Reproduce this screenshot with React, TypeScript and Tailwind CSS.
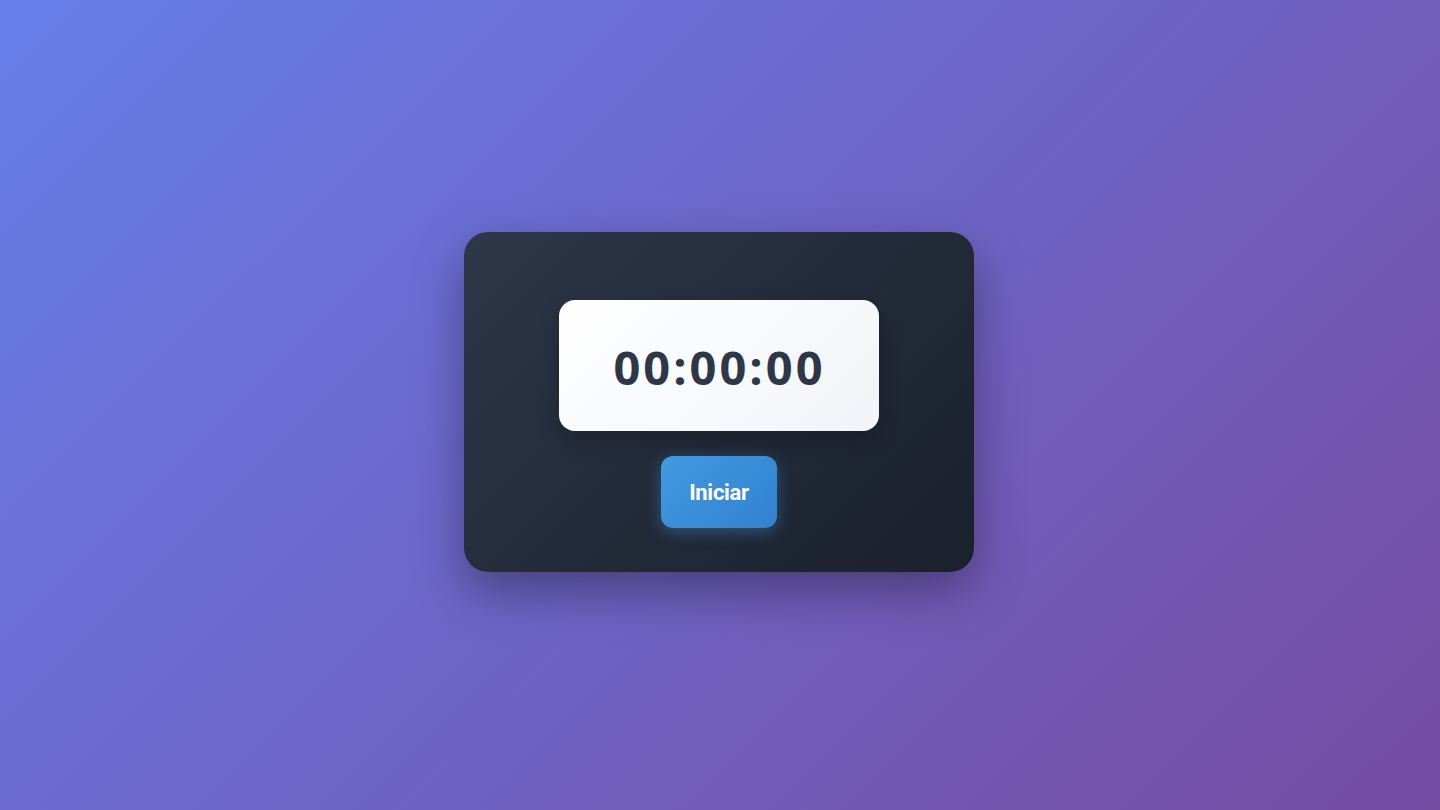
import React from "react";

export default function App() {
  return (
    <div className="w-full h-[810px] flex items-center justify-center bg-[linear-gradient(135deg,#667eea_0%,#764ba2_100%)]" style={{ fontFamily: "Roboto, 'Liberation Sans', sans-serif" }}>
      <div className="mb-[6px] mr-[2px] w-[510px] h-[340px] rounded-[24px] bg-[linear-gradient(135deg,#2d3748_0%,#1a202c_100%)] shadow-[0_20px_50px_rgba(0,0,0,0.35)] flex flex-col items-center pt-[68px]">
        <div className="w-[320px] h-[131px] rounded-[16px] bg-[linear-gradient(135deg,#ffffff_0%,#f1f4f8_100%)] shadow-[0_8px_20px_rgba(0,0,0,0.25)] flex items-center justify-center pt-[4px]">
          <span className="text-[47px] font-bold text-[#2d3748] tracking-[3px] leading-none pl-[1px]" style={{ fontFamily: "'Open Sans', 'Noto Sans', sans-serif" }}>00:00:00</span>
        </div>
        <button className="mt-[25px] w-[116px] h-[72px] rounded-[12px] bg-[linear-gradient(135deg,#4299e1_0%,#3182ce_100%)] shadow-[0_4px_15px_rgba(66,153,225,0.4)] text-white text-[22px] font-bold tracking-[-0.3px]">
          Iniciar
        </button>
      </div>
    </div>
  );
}
